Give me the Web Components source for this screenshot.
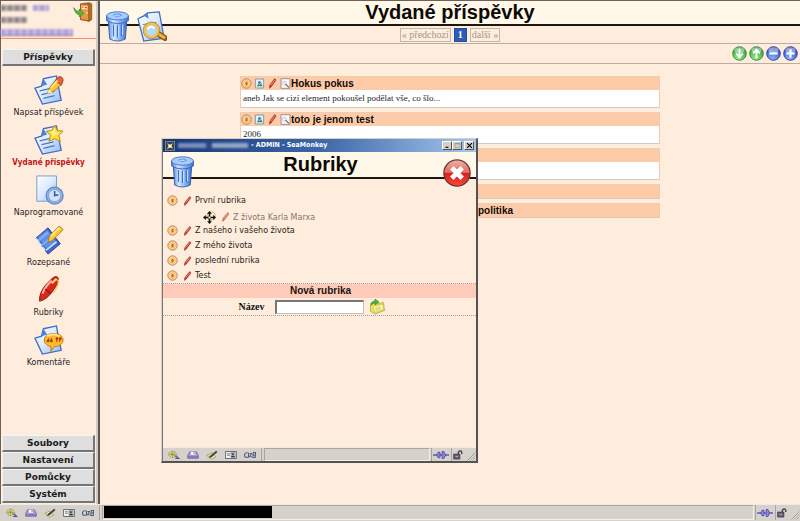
<!DOCTYPE html>
<html lang="cs">
<head>
<meta charset="utf-8">
<meta name="viewport" content="width=device-width, initial-scale=1">
<title>Vydané příspěvky</title>
<style>
  html, body { margin: 0; height: 100%; }
  body { background: #feeddd; color: #111; font-family: "Liberation Sans", Arial, sans-serif; font-size: 10px; }
</style>
</head>
<body>
<admin-app>
  <side-bar slot="side">
    <nav-section slot="top">Příspěvky</nav-section>
    <nav-item icon="write">Napsat příspěvek</nav-item>
    <nav-item icon="star" active>Vydané příspěvky</nav-item>
    <nav-item icon="clock">Naprogramované</nav-item>
    <nav-item icon="note">Rozepsané</nav-item>
    <nav-item icon="pen">Rubriky</nav-item>
    <nav-item icon="comment">Komentáře</nav-item>
    <nav-section slot="bottom">Soubory</nav-section>
    <nav-section slot="bottom">Nastavení</nav-section>
    <nav-section slot="bottom">Pomůcky</nav-section>
    <nav-section slot="bottom">Systém</nav-section>
  </side-bar>
  <page-head>Vydané příspěvky</page-head>
  <page-pager></page-pager>
  <tool-row></tool-row>
  <post-list>
    <post-card heading="Hokus pokus">aneb Jak se cizí element pokoušel podělat vše, co šlo...</post-card>
    <post-card heading="toto je jenom test">2006</post-card>
    <post-card heading=""></post-card>
    <post-card heading="" bare></post-card>
    <post-card heading="politika" bare far></post-card>
  </post-list>
  <popup-window slot="popup" heading="Rubriky" caption="- ADMIN - SeaMonkey">
    <rubric-row lead>První rubrika</rubric-row>
    <rubric-row drag>Z života Karla Marxa</rubric-row>
    <rubric-row>Z našeho i vašeho života</rubric-row>
    <rubric-row>Z mého života</rubric-row>
    <rubric-row>poslední rubrika</rubric-row>
    <rubric-row>Test</rubric-row>
    <rubric-form></rubric-form>
  </popup-window>
  <status-bar slot="status" masked></status-bar>
</admin-app>

<script>
const BLUE = `<linearGradient id="b" x1="0" y1="0" x2="1" y2="1"><stop offset="0" stop-color="#fff"/><stop offset=".5" stop-color="#dbeaff"/><stop offset="1" stop-color="#8db8f5"/></linearGradient>`;
const SHEET = `<path d="M8 5l4-3 12-1 5 27-21 3-6-23z" fill="url(#b)" stroke="#3f6cc4" stroke-width="1.3"/><path d="M8 5l5 3-1-6z" fill="#4d80d8"/><path d="M7 14l14-2M8 18l13-2M9 22l13-2" stroke="#5b7fb8" fill="none"/>`;
const LEAN = `<path d="M10 4l14-3 1 6 4 20-20 4-8-17 7-2z" fill="url(#b)" stroke="#3f6cc4" stroke-width="1.400"/><path d="M10 4l-2 8 6-2z" fill="#4d80d8"/><path d="M6 17l13-3M8 21l13-3M10 25l12-3" stroke="#4f79bd" stroke-width="1.300" fill="none"/>`;
const ball = (a, b, c, mark) => `<defs><radialGradient id="g" cx=".4" cy=".9" r=".95"><stop offset="0" stop-color="${a}"/><stop offset=".65" stop-color="${b}"/><stop offset="1" stop-color="${c}"/></radialGradient></defs><circle cx="16" cy="16" r="14.5" fill="url(#g)" stroke="${c}" stroke-width="2"/><ellipse cx="16" cy="9" rx="10.5" ry="6.5" fill="#fff" opacity=".42"/>${mark}`;
const ICONS = {
  trash: `<defs><linearGradient id="t"><stop offset="0" stop-color="#4f85e2"/><stop offset=".3" stop-color="#d3e7ff"/><stop offset=".6" stop-color="#8ab7f7"/><stop offset="1" stop-color="#3b6fd0"/></linearGradient></defs><path d="M4 8l2 21q10 4 20 0l2-21z" fill="url(#t)" stroke="#34599f"/><path d="M11 14v12M16 15v12M21 14v12" stroke="#3c70cf" stroke-width="1.6"/><path d="M12.5 14v12M17.5 15v12M22.5 14v11" stroke="#d8ebff"/><path d="M2 5v5q14 6 28 0V5z" fill="url(#t)" stroke="#3a62b4"/><ellipse cx="16" cy="5" rx="14" ry="4.200" fill="#a9ccfa" stroke="#4270c8"/><path d="M10 4q6-3 12 0l-3 2h-6z" fill="#6799e8"/><path d="M12 5q4-2 7 0" stroke="#e7f3ff" fill="none"/>`,
  preview: `<defs>${BLUE}</defs>${SHEET}<path d="M22 23l8 5" stroke="#8e5a13" stroke-width="6" stroke-linecap="round"/><path d="M22 23l8 5" stroke="#f5b83a" stroke-width="3"/><circle cx="16" cy="20" r="7" fill="#b5d8ff" stroke="#f0c246" stroke-width="3"/><circle cx="16" cy="20" r="8.600" fill="none" stroke="#9b6c18" stroke-width=".7"/><path d="M12 19q3-5 7-1" stroke="#fff" stroke-width="2" fill="none"/>`,
  write: `<defs>${BLUE}</defs>${LEAN}<path d="M14 20l3-7 7-9 6 5-8 8z" fill="#f9c23b" stroke="#a86a12"/><path d="M23 6l3-4q5-1 5 4l-2 5z" fill="#e8623f" stroke="#a33a24"/><path d="M14 20l2-5 4 4z" fill="#ffe4a8"/><path d="M18 14l7-8" stroke="#ffe883" stroke-width="2"/>`,
  star: `<defs>${BLUE}</defs>${LEAN}<path d="M22 0l3 6 6 .5-4.500 4.500 1.500 6.500-6-3-6 3 1.500-6.500L13 6.500l6-.5z" fill="#ffdf35" stroke="#b98614"/><path d="M22 3l1 5 4 1-5 2-3 2 1-4-3-2 4-.5z" fill="#fff39a"/>`,
  clock: `<defs>${BLUE}</defs><path d="M3 1h21v27H3z" fill="url(#b)" stroke="#7998cd"/><circle cx="22" cy="22" r="9" fill="#90b3e3" stroke="#5f86c0" stroke-width="1.4"/><circle cx="22" cy="22" r="6.500" fill="#d1e3fb" stroke="#7f9fce"/><path d="M22 17v5l4-1" stroke="#315795" stroke-width="1.600" fill="none"/>`,
  note: `<path d="M2 14L15 3l13 17-13 11z" fill="#3d69c9" stroke="#233f91"/><path d="M4 13L14 5l10 13-10 8z" fill="#5f90e8"/><path d="M4 17l11-9M8 22l12-10" stroke="#86aff2" stroke-width="2"/><path d="M2 14l3 4M5 18l3 4M9 23l3 4M13 27l11-9" stroke="#dce9ff" stroke-width="1.500"/><path d="M15 18l1-5 2-3L27 1l4 4-9 9-3 3z" fill="#ffc935" stroke="#a97712"/><path d="M18 12l9-9" stroke="#ffef93" stroke-width="1.800"/>`,
  pen: `<path d="M6 28Q5 19 13 10L20 3q5-3 6 1 0 6-6 13-6 9-14 11z" fill="#d9271c" stroke="#8e1a14" stroke-width="1"/><path d="M9 20q3-8 10-14" stroke="#ffaaa0" stroke-width="2.200" fill="none"/><path d="M12 15l6 5" stroke="#8e1a14" stroke-width="1.400"/><path d="M19 9l5-5" stroke="#ffe07b" stroke-width="2"/><path d="M24 5l2 1q0 7-6 13" stroke="#f5c758" stroke-width="1.500" fill="none"/>`,
  comment: `<defs>${BLUE}</defs><path d="M10 4l14-3 1 6 4 20-20 4-8-17 7-2z" fill="url(#b)" stroke="#3f6cc4" stroke-width="1.400"/><path d="M10 4l-2 8 6-2z" fill="#4d80d8"/><path d="M21 9c6 0 10 3 10 7s-4 7-9 7l-4 5v-5c-5-1-7-4-7-7 0-4 4-7 10-7z" fill="#fdb92a" stroke="#c17a0c"/><path d="M14 12q7-4 13 0" stroke="#ffe98a" stroke-width="2" fill="none"/><path d="M16 14l-1 3M19 14l-1 3M25 14l-1 4M28 14l-1 4" stroke="#b4401d" stroke-width="1.200"/><circle cx="15" cy="17" r="1.500" fill="#a7381b"/><circle cx="18.500" cy="17" r="1.500" fill="#a7381b"/><circle cx="24.500" cy="14.500" r="1.500" fill="#a7381b"/><circle cx="28" cy="14.500" r="1.500" fill="#a7381b"/>`,
  exit: `<path d="M12 3l14-2 4 2v25l-4 3-14-3z" fill="#b96b21" stroke="#6d3d12"/><path d="M12 3l13 1v26l-13-2z" fill="#e09a48" stroke="#8a4d17"/><path d="M14 6l9 1v5l-9-1z" fill="#ffe9cd"/><path d="M15 8h2M19 9h3" stroke="#dc2f1f" stroke-width="2"/><circle cx="22" cy="17" r="1.500" fill="#ffe98a"/><path d="M1 9q5 7 9 6V11l7 7-7 6v-4Q4 20 1 9z" fill="#58b53c" stroke="#2c7c20"/>`,
  down: ball('#9cf08e', '#4cb64a', '#37853c', `<path d="M16 6v17M9 16l7 8 7-8" stroke="#fff" stroke-width="4" fill="none"/>`),
  up: ball('#9cf08e', '#4cb64a', '#37853c', `<path d="M16 26V9M9 16l7-8 7 8" stroke="#fff" stroke-width="4" fill="none"/>`),
  minus: ball('#8fb1ff', '#4669d6', '#2b4190', `<path d="M7 16h18" stroke="#fff" stroke-width="4.500"/>`),
  plus: ball('#8fb1ff', '#4669d6', '#2b4190', `<path d="M7 16h18M16 7v18" stroke="#fff" stroke-width="4.500"/>`),
  close: `<defs><linearGradient id="r" x1="0" y1="0" x2="0" y2="1"><stop offset="0" stop-color="#f0b3aa"/><stop offset=".48" stop-color="#e4675c"/><stop offset=".52" stop-color="#d8201b"/><stop offset="1" stop-color="#fb4a38"/></linearGradient></defs><circle cx="16" cy="16" r="15" fill="url(#r)" stroke="#6b3a38" stroke-width="1.500"/><path d="M10 10l12 12M22 10L10 22" stroke="#fff" stroke-width="5.500"/>`,
  dot: `<circle cx="16" cy="16" r="13.500" fill="#fff0c4" stroke="#a9663a" stroke-width="2.500"/><circle cx="16" cy="16" r="9" fill="#ffdf9c" stroke="#f1a542" stroke-width="2"/><path d="M13 22V12l6-2v11z" fill="#cf5a1f"/>`,
  picture: `<path d="M4 3h24v26H4z" fill="#e4f0fb" stroke="#7f8fa5" stroke-width="2.500"/><path d="M8 24l5-7 4 3 4-5 4 9z" fill="#3c8b67"/><circle cx="16" cy="13" r="4.500" fill="#3f8fa8"/>`,
  pencil: `<path d="M7 30q-1-8 5-15L22 2q5 0 3 6L15 22q-3 6-8 8z" fill="#c8372c" stroke="#8f2a26" stroke-width="1.500"/><path d="M11 21L22 6" stroke="#f29a8c" stroke-width="2.500"/>`,
  find: `<path d="M3 2h26v28H3z" fill="#fffaf3" stroke="#8b8590" stroke-width="2.500"/><circle cx="13" cy="15" r="6" fill="#e6edf5" stroke="#bcc5d2" stroke-width="2"/><path d="M16 18l10 9" stroke="#5d5663" stroke-width="3"/>`,
  move: `<circle cx="20" cy="12" r="10" fill="#fff0c4" stroke="#c3a27c" stroke-width="2"/><path d="M16 0l6 7h-4v7h7v-4l7 6-7 6v-4h-7v7h4l-6 7-6-7h4v-7H7v4l-7-6 7-6v4h7V7h-4z" fill="#111"/><circle cx="16" cy="16" r="2.500" fill="#fff"/>`,
  folder: `<path d="M3 9l9-2 3 3 14-3 2 16-19 7-9-5z" fill="#f2df55" stroke="#8b8425"/><path d="M7 15l21-5 1 11-17 6z" fill="#fff4a0" stroke="#c2ad33"/><path d="M11 19l10-5 3 6-9 4z" fill="#c8dfa2"/><path d="M5 12q-1-8 7-8V0l8 6-8 6V8q-4 0-7 4z" fill="#46b53c" stroke="#20751d"/>`,
  app: `<path d="M1 1h30v30H1z" fill="#31435c" stroke="#d9c68b" stroke-width="2"/><path d="M7 6l9 6 9-6-4 10 5 9-10-4-10 5 5-10z" fill="#f1d375"/><circle cx="16" cy="16" r="4" fill="#fff"/>`,
  globe: `<circle cx="12" cy="14" r="10" fill="#e7e48b" stroke="#77763b" stroke-width="2" stroke-dasharray="4 2"/><path d="M2 14h20M12 4v20M5 8l15 12M19 7L5 21" stroke="#77763b" stroke-width="1.500"/><path d="M17 18l13 9M19 27h12M24 18v11" stroke="#4d4787" stroke-width="2.500"/>`,
  mail: `<path d="M2 18L7 6h18l5 12v8H2z" fill="#a8a3df" stroke="#4a408a" stroke-width="2"/><path d="M9 5h14v11H9z" fill="#fff" stroke="#6d66a8"/><path d="M2 19h28v7H2z" fill="#8178c6"/><path d="M17 8h4v4h-4z" fill="#c44767"/>`,
  compose: `<path d="M2 17l12-7 12 12-12 8z" fill="#efeaa9" stroke="#77724c" stroke-width="1.500"/><path d="M10 20L27 3l3 3-16 17-5 2z" fill="#444" stroke="#1c1c1c"/><path d="M5 18l8 7" stroke="#a9a13d" stroke-width="2"/>`,
  card: `<path d="M1 5h30v22H1z" fill="#f5f5f5" stroke="#555" stroke-width="2.500"/><path d="M16 9h11v14H16z" fill="#ced4e3" stroke="#3d4768" stroke-width="1.500"/><circle cx="21" cy="13" r="3" fill="#333"/><path d="M17 22q4-8 9 0zM5 12h8M5 17h8" stroke="#555" stroke-width="2"/>`,
  chat: `<path d="M11 9H4L1 15l2 8h9M12 9v14M15 11h5l-5 11h6M23 25l2-17h6l-1 16h-6M24 16h6" fill="none" stroke="#4b5878" stroke-width="2.800"/>`,
  plug: `<path d="M0 16h32" stroke="#4843a3" stroke-width="4"/><path d="M10 7q-5 9 0 18h4V7zM18 5v22h4q6-11 0-22z" fill="#8c88e2" stroke="#37318d" stroke-width="1.500"/>`,
  lock: `<path d="M2 13h20v16H2z" fill="#675d70" stroke="#2c2833" stroke-width="2"/><path d="M17 14V8q1-5 6-5t5 5v5" fill="none" stroke="#4b4355" stroke-width="4.500"/><path d="M8 19h8v4H8z" fill="#a79db0"/>`,
  grip: `<path d="M30 2L2 30M30 11L11 30M30 20L20 30" stroke="#85817a" stroke-width="2.500"/><path d="M31 5L5 31M31 14L14 31M31 23l-8 8" stroke="#fff" stroke-width="1.500"/>`,
  min: `<path d="M7 24h13" stroke="#000" stroke-width="5"/>`,
  max: `<path d="M5 6h22v20H5z" fill="none" stroke="#8d8d8d" stroke-width="2.500"/><path d="M5 8h22" stroke="#8d8d8d" stroke-width="4"/>`,
  cross: `<path d="M5 5l22 22M27 5L5 27" stroke="#000" stroke-width="5"/>`
};

/* Registers an element whose open shadow root is filled from a template. */
function define(name, css, html) {
  customElements.define(name, class extends HTMLElement {
    constructor() {
      super();
      this.attachShadow({ mode: 'open' });
    }
    connectedCallback() {
      if (this.shadowRoot.childNodes.length) return;
      const t = document.createElement('template');
      t.innerHTML = `<style>:host{display:block;box-sizing:border-box}*{box-sizing:border-box}button{font:inherit;color:inherit;background:none;border:0;padding:0;display:flex}${css}</style>` +
        (typeof html === 'function' ? html(this) : html);
      this.shadowRoot.append(t.content.cloneNode(true));
    }
  });
}

define('ui-icon', `:host{display:block;flex:none;width:var(--w,12px);height:var(--h,var(--w,12px))}svg{display:block;width:100%;height:100%}`,
  el => `<svg viewBox="0 0 32 32" preserveAspectRatio="none" aria-hidden="true">${ICONS[el.getAttribute('name')]}</svg>`);

define('admin-app', `
  :host{display:flex;flex-direction:column;height:100vh;min-height:420px;position:relative;overflow:hidden;border-top:1px solid #6c6059}
  .body{flex:1;display:flex;min-height:0}
  main{flex:1;min-width:0}`,
  `<div class="body"><slot name="side"></slot><main><slot></slot></main></div><slot name="status"></slot><slot name="popup"></slot>`);

define('side-bar', `
  :host{flex:none;width:100px;display:flex;flex-direction:column;border-left:1px solid #6c6059;border-right:2px solid #5c5551;padding-right:2px;background:linear-gradient(90deg,#feeddd 95px,#d2cbc4 95px)}
  .user{display:flex;justify-content:space-between;height:38px;border-bottom:1px solid #fb8e66;padding:0 3px 0 0;margin-bottom:10px}
  .who{display:flex;flex-direction:column;gap:6px;padding-top:4px;filter:blur(1px)}
  .line{display:flex;gap:6px}
  i{display:block;height:6px;width:26px;background:repeating-linear-gradient(90deg,#8f8688 0 4px,#b5aaa9 4px 7px)}
  i.s{width:16px}i.p{background:repeating-linear-gradient(90deg,#b0a0d5 0 4px,#cbbce0 4px 7px)}
  a{display:block}a i{width:72px;height:7px;border-bottom:1px solid #7568b5}
  .who a{width:66px}
  .exit{--w:20px;align-self:flex-start;padding-top:1px;cursor:pointer}
  nav{display:flex;flex-direction:column;gap:2px;padding-top:9px;flex:1;min-height:0}
  .end{display:flex;flex-direction:column;padding:0 1px 1px 0}`,
  `<div class="user"><div class="who"><div class="line"><i></i><i class="s p"></i></div><i></i><a href="#" aria-label="Profil"><i class="p"></i></a></div>
   <button class="exit" aria-label="Odhlásit"><ui-icon name="exit"></ui-icon></button></div>
   <slot name="top"></slot><nav><slot></slot></nav><div class="end"><slot name="bottom"></slot></div>`);

define('nav-section', `
  :host{margin:0 1px}
  :host([slot=bottom]){margin-right:0}
  button{display:block;width:100%;height:17px;background:#dedede;border:1px solid #f4f4f4;border-right:2px solid #757575;border-bottom:2px solid #757575;text-align:center;font:bold 9px/14px "DejaVu Sans",Verdana,sans-serif;color:#1b1b1b}`,
  `<button><slot></slot></button>`);

define('nav-item', `
  a{display:flex;flex-direction:column;align-items:center;gap:2px;height:48px;text-decoration:none;color:#29221d;font:8px/12px "DejaVu Sans",Verdana,sans-serif;white-space:nowrap}
  :host([active]) a{color:#c01420;font-weight:bold;font-family:"DejaVu Sans Condensed","DejaVu Sans",sans-serif}
  ui-icon{--w:30px}`,
  el => `<a href="#"><ui-icon name="${el.getAttribute('icon')}"></ui-icon><span><slot></slot></span></a>`);

define('page-head', `
  :host{background:#fff8e8;border-bottom:2px solid #1d1712;height:25px;display:grid;position:relative}
  h1{margin:0;text-align:center;font:bold 20px/23px "Liberation Sans",Arial,sans-serif;color:#0c0907}
  .acts{position:absolute;left:5px;top:10px;display:flex;gap:6px}
  ui-icon{--w:25px;--h:31px}button+button ui-icon{--w:31px}`,
  `<h1><slot></slot></h1><div class="acts"><button aria-label="Koš"><ui-icon name="trash"></ui-icon></button><button aria-label="Náhled"><ui-icon name="preview"></ui-icon></button></div>`);

define('page-pager', `
  :host{display:flex;justify-content:center;align-items:center;gap:3px;height:18px;border-bottom:1px solid #b9aea6;font:10px/12px "Liberation Serif","Times New Roman",serif}
  a,b{border:1px solid #c3b6aa;padding:0 1px;color:#a1968d;text-decoration:none}
  b{background:#2c5cb4;border-color:#244f9f;color:#fff;padding:0 3px}`,
  `<a href="#">« předchozí</a><b>1</b><a href="#">další »</a>`);

define('tool-row', `
  :host{display:flex;justify-content:flex-end;align-items:center;gap:2px;height:20px;padding-right:2px;border-bottom:1px solid #b9aea6}
  ui-icon{--w:15px}`,
  ['down:Dolů', 'up:Nahoru', 'minus:Sbalit', 'plus:Rozbalit'].map(s => { const [n, l] = s.split(':'); return `<button aria-label="${l}"><ui-icon name="${n}"></ui-icon></button>`; }).join(''));

define('post-list', `:host{display:flex;flex-direction:column;gap:4px;width:60%;min-width:300px;margin:12px auto 0}`, `<slot></slot>`);

define('post-card', `
  :host{border:1px solid #f0cbb0;border-bottom-color:#d9c9bd;background:#fff;height:32px}
  :host([bare]){height:15px;background:#fecba8}
  header{display:flex;align-items:center;gap:2px;height:13px;background:#fecba8}
  ui-icon{--w:11px}
  button:last-of-type{margin-right:-2px}
  h2{margin:0;font:bold 10px/13px "Liberation Sans",Arial,sans-serif;color:#120b08;white-space:nowrap}
  :host([far]) h2{padding-left:187px}
  p{margin:0;padding:2px;font:9px/13px "Liberation Serif","Times New Roman",serif;color:#262626}
  :host([bare]) p{display:none}`,
  el => `<header>${[['dot', 'Stav'], ['picture', 'Obrázek'], ['pencil', 'Upravit'], ['find', 'Zobrazit']].map(([n, l]) => `<button aria-label="${l}"><ui-icon name="${n}"></ui-icon></button>`).join('')}<h2>${el.getAttribute('heading')}</h2></header><p><slot></slot></p>`);

define('popup-window', `
  :host{position:absolute;left:161px;top:137px;width:317px;height:325px;display:flex;flex-direction:column;background:#feeddd;border:1px solid #d4d0c8;border-right:2px solid #535353;border-bottom:2px solid #535353;padding:0 0 0 1px;box-shadow:inset 1px 0 #777}
  .bar{display:flex;align-items:center;gap:3px;height:13px;padding:0 2px;background:linear-gradient(90deg,#173777,#3d66a8 50%,#a4c8ee);color:#fff;font:bold 7px/13px "DejaVu Sans Condensed","DejaVu Sans",Verdana,sans-serif}
  .bar ui-icon{--w:10px}
  .mask{width:70px;height:5px;background:linear-gradient(90deg,#7a8eb8 0 28px,#2b4a86 28px 34px,#93a5c6 34px);filter:blur(1px)}
  .win{margin-left:auto;display:flex}
  .win button{width:10px;height:9px;background:#d4d0c8;border:1px solid #fff;border-right-color:#555;border-bottom-color:#555;align-items:center;justify-content:center}
  .win button:last-child{margin-left:2px}.win ui-icon{--w:7px}
  .head{position:relative;background:#fff8e8;height:27px;border-bottom:2px solid #1d1712;flex:none}
  h1{margin:0;padding-left:2px;text-align:center;font:bold 20px/25px "Liberation Sans",Arial,sans-serif;color:#0c0907}
  .bin{position:absolute;left:7px;top:4px;--w:25px;--h:32px}
  .shut{position:absolute;right:5px;top:7px;--w:28px}
  .list{flex:1;min-height:0;padding-top:14px}`,
  el => `<div class="bar"><ui-icon name="app"></ui-icon><div class="mask"></div><span>${el.getAttribute('caption')}</span>
    <div class="win"><button aria-label="Minimalizovat"><ui-icon name="min"></ui-icon></button><button aria-label="Maximalizovat"><ui-icon name="max"></ui-icon></button><button aria-label="Zavřít okno"><ui-icon name="cross"></ui-icon></button></div></div>
    <div class="head"><button class="bin" aria-label="Koš"><ui-icon name="trash"></ui-icon></button><h1>${el.getAttribute('heading')}</h1><button class="shut" aria-label="Zavřít"><ui-icon name="close"></ui-icon></button></div>
    <div class="list"><slot></slot></div><status-bar></status-bar>`);

define('rubric-row', `
  :host{display:flex;align-items:center;height:15px;padding-left:4px;font:8px/15px "DejaVu Sans",Verdana,sans-serif;color:#2a2420;white-space:nowrap}
  :host([lead]){margin-bottom:3px}
  :host([drag]){padding-left:40px;height:12px;color:#84776e}
  ui-icon{--w:11px}
  button+button{margin:0 2px 0 4px}
  :host([drag]) button:first-child{--w:13px}
  :host([drag]) button+button{opacity:.7}`,
  el => `<button aria-label="Přesunout"><ui-icon name="${el.hasAttribute('drag') ? 'move' : 'dot'}" ${el.hasAttribute('drag') ? 'style="--w:13px"' : ''}></ui-icon></button><button aria-label="Upravit"><ui-icon name="pencil" style="--h:10px"></ui-icon></button><slot></slot>`);

define('rubric-form', `
  :host{border-top:1px dotted #ae9c90;border-bottom:1px dotted #ae9c90}
  h2{margin:0;padding-left:2px;background:#fecbbb;text-align:center;font:bold 10px/14px "Liberation Sans",Arial,sans-serif;color:#24130f}
  form{display:flex;align-items:center;justify-content:center;gap:5px;height:17px;padding-right:16px}
  label{font:bold 10px/14px "Liberation Serif","Times New Roman",serif;padding-right:5px}
  input{width:89px;height:14px;border:1px solid #c9c2b8;border-top:2px solid #777;border-left:2px solid #777;background:#fff;padding:0 2px;font:10px/11px "Liberation Serif",serif}
  ui-icon{--w:16px}`,
  `<h2>Nová rubrika</h2><form><label for="n">Název</label><input id="n" type="text"><button type="button" aria-label="Přidat"><ui-icon name="folder"></ui-icon></button></form>`);

define('status-bar', `
  :host{display:flex;align-items:stretch;height:14px;background:#d6d2cb;flex:none;border-top:1px solid #eeebe6}
  :host([masked]){height:17px;padding:0 0 1px 1px}
  .set{display:flex;align-items:center;gap:7px;padding:0 5px 0 5px;border-right:1px solid #aaa49c}
  .set ui-icon{--w:12px;--h:10px}
  .text{flex:1;border:1px solid #aaa49c;border-right-color:#f3f0eb;border-bottom-color:#f3f0eb;margin-left:2px}
  :host([masked]) .text i{display:block;margin-left:1px;width:168px;height:12px;background:#000}
  .box{display:flex;align-items:center;border-left:1px solid #aaa49c;margin-left:1px;padding:0 1px}
  .box ui-icon{--w:16px;--h:10px}.box+.box ui-icon{--w:10px}
  .grip{align-self:flex-end;--w:9px;margin-left:3px}`,
  `<div class="set">${[['globe', 'Prohlížeč'], ['mail', 'Pošta'], ['compose', 'Editor'], ['card', 'Adresář'], ['chat', 'Chat']].map(([n, l]) => `<button aria-label="${l}"><ui-icon name="${n}"></ui-icon></button>`).join('')}</div><div class="text"><i></i></div><div class="box"><ui-icon name="plug"></ui-icon></div><div class="box"><ui-icon name="lock"></ui-icon></div><ui-icon class="grip" name="grip"></ui-icon>`);
</script>
</body>
</html>
